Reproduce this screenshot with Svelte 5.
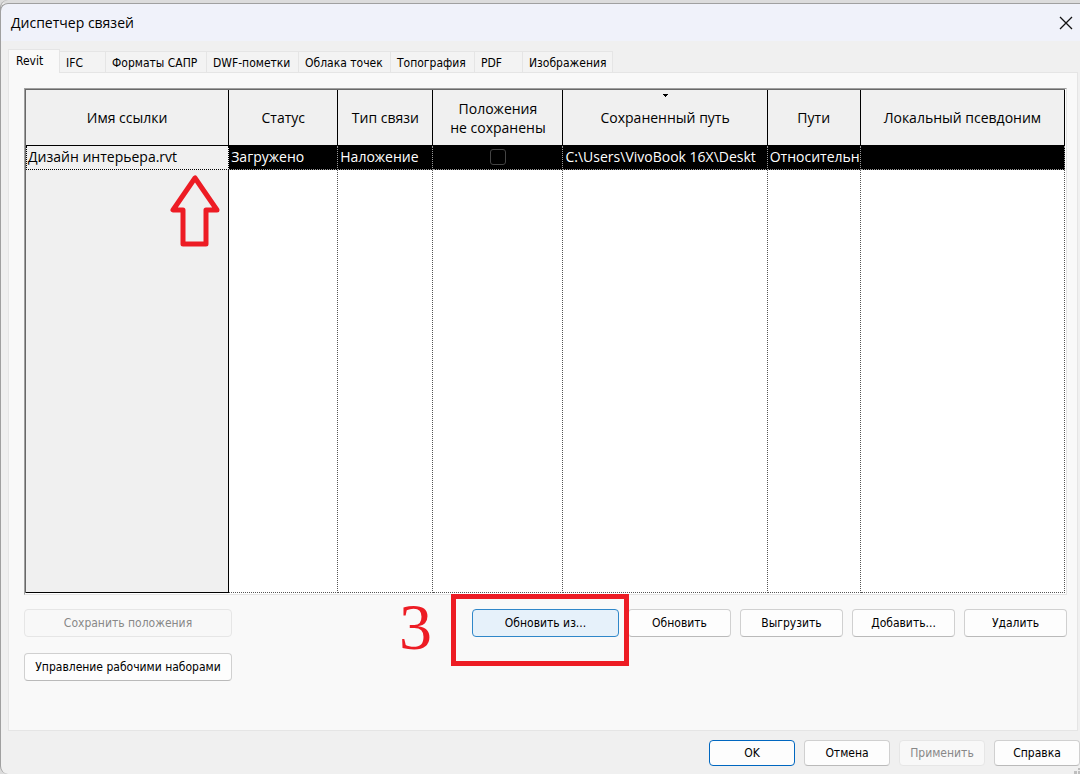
<script lang="ts">
	interface Column {
		title: string;
		size: number;
		sorted?: boolean;
	}

	interface Tab {
		title: string;
		width: number;
	}

	const tabs: Tab[] = [
		{ title: 'Revit', width: 52 },
		{ title: 'IFC', width: 46 },
		{ title: 'Форматы САПР', width: 101 },
		{ title: 'DWF-пометки', width: 92 },
		{ title: 'Облака точек', width: 92 },
		{ title: 'Топография', width: 84 },
		{ title: 'PDF', width: 48 },
		{ title: 'Изображения', width: 90 }
	];

	// Relative column sizes, turned into percentages below
	const columns: Column[] = [
		{ title: 'Имя ссылки', size: 203 },
		{ title: 'Статус', size: 109 },
		{ title: 'Тип связи', size: 95 },
		{ title: 'Положения\nне сохранены', size: 130 },
		{ title: 'Сохраненный путь', size: 204, sorted: true },
		{ title: 'Пути', size: 93 },
		{ title: 'Локальный псевдоним', size: 204 }
	];
	const total = columns.reduce((sum, c) => sum + c.size, 0);

	const link = {
		name: 'Дизайн интерьера.rvt',
		status: 'Загружено',
		type: 'Наложение',
		path: 'C:\\Users\\VivoBook 16X\\Deskt',
		pathType: 'Относительн',
		alias: ''
	};

	let active = $state(0);
	let notSaved = $state(false);
</script>

<div class="dialog">
	<header class="titlebar">
		<h1>Диспетчер связей</h1>
		<button class="close" aria-label="Закрыть">
			<svg width="14" height="14" viewBox="0 0 14 14">
				<path d="M1 1 L13 13 M13 1 L1 13" stroke="#111" stroke-width="1.3" fill="none" />
			</svg>
		</button>
	</header>

	<div class="tabs" role="tablist">
		{#each tabs as tab, i}
			<button
				class="tab"
				class:active={active === i}
				role="tab"
				aria-selected={active === i}
				style:width="{tab.width}px"
				onclick={() => (active = i)}
			>{tab.title}</button>
		{/each}
	</div>

	<main class="panel">
		<div class="frame">
			<table>
				<colgroup>
					{#each columns as col}
						<col style:width="{(col.size / total) * 100}%" />
					{/each}
				</colgroup>
				<thead>
					<tr>
						{#each columns as col}
							<th>
								{#if col.sorted}
									<svg class="sort" width="5" height="4" viewBox="0 0 5 4">
										<path d="M0 0 H5 V1 H4 V2 H3 V3 H2 V2 H1 V1 H0 Z" fill="#000" />
									</svg>
								{/if}
								<span class="title">{col.title}</span>
							</th>
						{/each}
					</tr>
				</thead>
				<tbody>
					<tr class="selected">
						<td>{link.name}</td>
						<td>{link.status}</td>
						<td>{link.type}</td>
						<td class="check">
							<input type="checkbox" aria-label="Положения не сохранены" bind:checked={notSaved} />
						</td>
						<td>{link.path}</td>
						<td>{link.pathType}</td>
						<td>{link.alias}</td>
					</tr>
					<tr class="rest">
						<td>
							<svg class="arrow" width="52" height="76" viewBox="0 0 52 76">
								<path
									d="M26 6 L4 38 H14 V72 H37 V38 H48 Z"
									fill="none"
									stroke="#ed1c24"
									stroke-width="5"
									stroke-linejoin="round"
								/>
							</svg>
						</td>
						<td></td>
						<td></td>
						<td></td>
						<td></td>
						<td></td>
						<td></td>
					</tr>
				</tbody>
			</table>
		</div>

		<div class="actions">
			<div class="left">
				<button class="btn" disabled>Сохранить положения</button>
				<button class="btn">Управление рабочими наборами</button>
			</div>
			<div class="right">
				<div class="marked">
					<button class="btn hot">Обновить из...</button>
					<span class="step">3</span>
					<span class="box"></span>
				</div>
				<button class="btn">Обновить</button>
				<button class="btn">Выгрузить</button>
				<button class="btn">Добавить...</button>
				<button class="btn">Удалить</button>
			</div>
		</div>
	</main>

	<footer>
		<button class="btn default">OK</button>
		<button class="btn">Отмена</button>
		<button class="btn" disabled>Применить</button>
		<button class="btn">Справка</button>
		<svg class="grip" width="6" height="6" viewBox="0 0 6 6">
			<path d="M0 3 h3 v3 h-3 Z M4 0 h2 v2 h-2 Z M4 3 h2 v3 h-2 Z" fill="#bfbfbf" />
		</svg>
	</footer>
</div>

<style>
	:global(body) {
		margin: 0;
		background: #dcdcdc;
	}
	.dialog {
		box-sizing: border-box;
		min-height: 100vh;
		display: flex;
		flex-direction: column;
		position: relative;
		border-left: 1px solid #a0a0a0;
		border-radius: 8px 0 0 8px;
		background: linear-gradient(#dcdcdc 3px, #f0f0f0 3px);
		font-family: 'DejaVu Sans Condensed', 'DejaVu Sans', sans-serif;
		font-size: 12px;
		color: #000;
	}
	.titlebar {
		display: flex;
		align-items: center;
		justify-content: space-between;
		height: 37px;
		margin-top: 3px;
		margin-left: -1px;
		padding: 0 7px 0 10px;
		background: #f0f2fa;
		border-top: 1px solid #a0a0a0;
		border-left: 1px solid #a0a0a0;
		border-top-left-radius: 8px;
	}
	h1 {
		margin: 0;
		font: 14px/20px 'Open Sans', 'Noto Sans', sans-serif;
	}
	.close {
		padding: 0;
		border: none;
		background: none;
		line-height: 0;
	}
	.tabs {
		display: flex;
		align-items: flex-end;
		padding: 8px 7px 0;
	}
	.tab {
		box-sizing: border-box;
		height: 21px;
		padding: 2px 0 0 6px;
		border: 1px solid #e5e5e5;
		border-width: 1px 1px 0 0;
		background: #f3f3f3;
		color: #000;
		font: inherit;
		text-align: left;
		white-space: nowrap;
	}
	.tab.active {
		height: 24px;
		margin-bottom: -1px;
		padding: 0 0 1px 7px;
		border-left-width: 1px;
		background: #f9f9f9;
		z-index: 1;
	}
	.panel {
		flex: 1;
		display: flex;
		flex-direction: column;
		margin: 0 2px 0 7px;
		padding: 15px 10px 49px 15px;
		border: 1px solid #e5e5e5;
		background: #f9f9f9;
	}
	.frame {
		flex: 1;
		display: flex;
		padding: 0 1px 1px 0;
		border: 1px solid;
		border-color: #a0a0a0 #e3e3e3 #e3e3e3 #a0a0a0;
		background: #fff;
	}
	table {
		width: 100%;
		table-layout: fixed;
		border-spacing: 0;
		border-top: 1px solid #696969;
		border-left: 1px solid #696969;
		font: 14px/19px 'Open Sans', 'Noto Sans', sans-serif;
	}
	th {
		position: relative;
		height: 55px;
		padding: 0;
		border-right: 1px solid #000;
		border-bottom: 1px solid #000;
		background: #f0f0f0;
		font-weight: 400;
	}
	.title {
		white-space: pre-line;
	}
	.sort {
		position: absolute;
		top: 4px;
		left: 49%;
	}
	td {
		padding: 0 2px;
		border-right: 1px dotted #555;
		border-bottom: 1px dotted #555;
		overflow: hidden;
		white-space: nowrap;
		vertical-align: top;
	}
	td:first-child {
		background: #f0f0f0;
		border-right: 1px solid #000;
	}
	.selected td {
		height: 21px;
		padding-bottom: 2px;
		background: #000;
		color: #fff;
		border-color: #999;
		vertical-align: middle;
	}
	.selected td:first-child {
		padding: 0 1px 2px;
		border: 1px dotted #000;
		border-top: none;
		background: #f0f0f0;
		color: #000;
	}
	.check input {
		appearance: none;
		display: block;
		box-sizing: border-box;
		width: 16px;
		height: 16px;
		margin: 0 auto;
		border: 1px solid #444;
		border-radius: 3px;
	}
	.rest td:first-child {
		position: relative;
		border-bottom: 1px solid #000;
	}
	.arrow {
		position: absolute;
		top: 2px;
		right: 7px;
	}
	.actions {
		display: flex;
		justify-content: space-between;
		align-items: flex-start;
		padding-top: 14px;
	}
	.left {
		display: flex;
		flex-direction: column;
		gap: 16px;
		width: 208px;
	}
	.right {
		display: flex;
		gap: 9px;
	}
	.right .btn {
		width: 103px;
	}
	.right .hot {
		width: 147px;
	}
	.btn {
		box-sizing: border-box;
		height: 28px;
		padding: 0;
		border: 1px solid #d0d0d0;
		border-bottom-color: #bababa;
		border-radius: 4px;
		background: #fdfdfd;
		color: #000;
		font: inherit;
		white-space: nowrap;
	}
	.btn:disabled {
		border-color: #e6e6e6;
		background: #f8f8f8;
		color: #888;
	}
	.hot {
		border-color: #2f87c9;
		background: #e6f1fa;
	}
	.default {
		border-color: #0067c0;
	}
	.marked {
		position: relative;
	}
	/* Tutorial marks drawn over the button row */
	.box {
		position: absolute;
		inset: -15px -10px -29px -21px;
		border: 5px solid #ed1c24;
		pointer-events: none;
		z-index: 1;
	}
	.step {
		position: absolute;
		top: -18px;
		right: 187px;
		color: #ed1c24;
		font: 66px/72px 'Liberation Serif', serif;
	}
	footer {
		display: flex;
		justify-content: flex-end;
		gap: 9px;
		padding: 9px 0 8px;
	}
	footer .btn {
		width: 86px;
		height: 26px;
	}
	.grip {
		position: absolute;
		right: 0;
		bottom: 0;
	}
</style>
